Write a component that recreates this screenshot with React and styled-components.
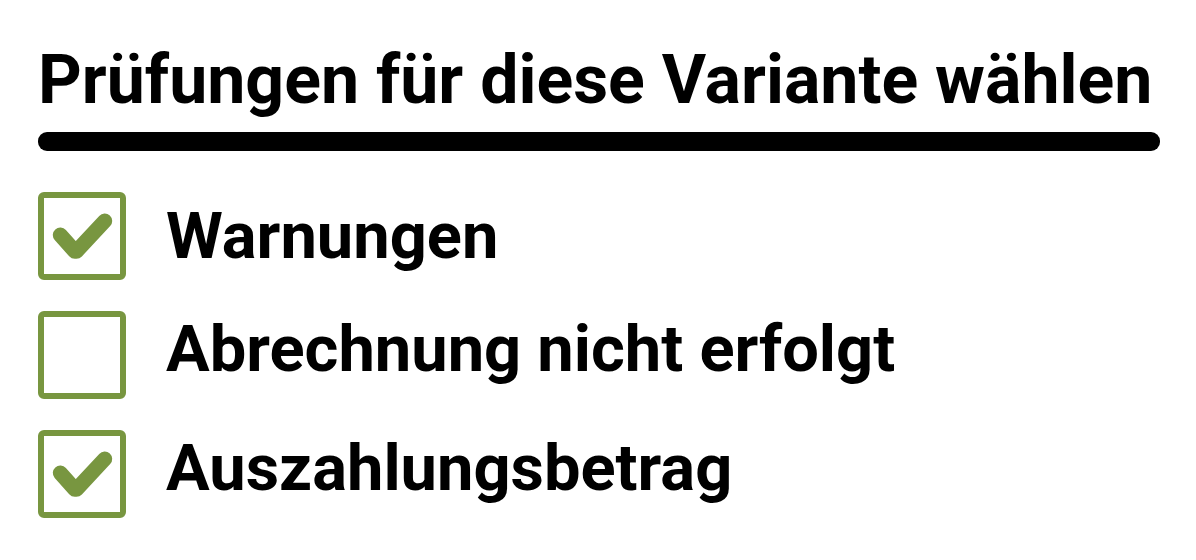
import React, { useState } from 'react';
import styled, { createGlobalStyle } from 'styled-components';

const GlobalStyle = createGlobalStyle`
	body {
		margin: 0;
		background: #fff;
		color: #000;
		font-family: Roboto, sans-serif;
	}
`;

const Panel = styled.fieldset`
	margin: 0;
	padding: 40px 36px 40px 38px;
	border: 0;
	min-width: 0;
`;

const Title = styled.h1`
	margin: 0;
	font-size: 68px;
	line-height: 80px;
	font-weight: 700;
	white-space: nowrap;
`;

const Divider = styled.hr`
	height: 19px;
	margin: 12px 0 41px;
	border: 0;
	border-radius: 9px;
	background: #000;
`;

const List = styled.div`
	display: flex;
	flex-direction: column;
	gap: 31px;
`;

const Option = styled.label`
	display: flex;
	align-items: ${({ $align }) => $align};
	gap: 40px;
	cursor: pointer;
`;

const Box = styled.span`
	display: grid;
	flex: none;
	width: 88px;
	height: 88px;

	> * {
		grid-area: 1 / 1;
	}
`;

const Checkbox = styled.input`
	appearance: none;
	width: 100%;
	height: 100%;
	margin: 0;
	box-sizing: border-box;
	border: 6px solid #789640;
	border-radius: 6px;
	background: #fff;
	cursor: pointer;
`;

const Tick = styled.svg`
	width: 100%;
	height: 100%;
	pointer-events: none;
	fill: none;
	stroke: #789640;
	stroke-width: 15px;
	stroke-linecap: round;
	stroke-linejoin: round;
`;

const OptionText = styled.span`
	font-size: 65px;
	line-height: 76px;
	font-weight: 700;
`;

const checks = [
	{ id: 'warnings', label: 'Warnungen', checked: true, align: 'center' },
	{ id: 'unbilled', label: 'Abrechnung nicht erfolgt', checked: false, align: 'flex-start' },
	{ id: 'amount', label: 'Auszahlungsbetrag', checked: true, align: 'flex-start' }
];

function CheckOption({ id, label, align, checked: initial }) {
	const [checked, setChecked] = useState(initial);

	return (
		<Option htmlFor={id} $align={align}>
			<Box>
				<Checkbox id={id} type="checkbox" checked={checked} onChange={e => setChecked(e.target.checked)} />
				{checked && (
					<Tick viewBox="0 0 88 88" aria-hidden="true">
						<path d="M22.3 43L36.8 59.3H38.4L66.7 29" />
					</Tick>
				)}
			</Box>
			<OptionText>{label}</OptionText>
		</Option>
	);
}

export default function App() {
	return (
		<>
			<GlobalStyle />
			<Panel aria-labelledby="checks-title">
				<Title id="checks-title">Prüfungen für diese Variante wählen</Title>
				<Divider />
				<List>
					{checks.map(check => <CheckOption key={check.id} {...check} />)}
				</List>
			</Panel>
		</>
	);
}
